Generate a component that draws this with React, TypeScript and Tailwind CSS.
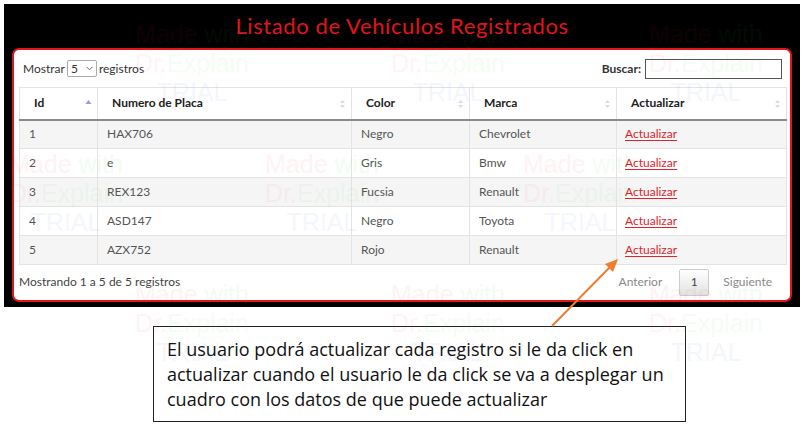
import React from 'react'

const rows = [
  { id: 1, placa: 'HAX706', color: 'Negro', marca: 'Chevrolet' },
  { id: 2, placa: 'e', color: 'Gris', marca: 'Bmw' },
  { id: 3, placa: 'REX123', color: 'Fucsia', marca: 'Renault' },
  { id: 4, placa: 'ASD147', color: 'Negro', marca: 'Toyota' },
  { id: 5, placa: 'AZX752', color: 'Rojo', marca: 'Renault' }
]

const columns = [
  { label: 'Id', width: 'w-[78px]', sorted: true },
  { label: 'Numero de Placa', width: 'w-[254px]', sorted: false },
  { label: 'Color', width: 'w-[118px]', sorted: false },
  { label: 'Marca', width: 'w-[147px]', sorted: false },
  { label: 'Actualizar', width: 'w-[170px]', sorted: false }
]

// watermark tiles left by the screenshot tool
const marks = [
  { x: 130, y: 20 }, { x: 386, y: 20 }, { x: 644, y: 20 },
  { x: 4, y: 150 }, { x: 260, y: 150 }, { x: 518, y: 150 },
  { x: 130, y: 280 }, { x: 386, y: 280 }, { x: 644, y: 280 }
]

function SortIcon({ active }: { active: boolean }) {
  if (active) {
    return (
      <svg width="7" height="10" viewBox="0 0 7 10" className="absolute right-[5px] top-[11px]">
        <path d="M0.5 5 L3.5 1 L6.5 5 Z" fill="#9a9ad8" />
      </svg>
    )
  }
  return (
    <svg width="7" height="10" viewBox="0 0 7 10" className="absolute right-[5px] top-[11px]">
      <path d="M1 4 L3.5 1 L6 4 Z" fill="#dcdcdc" />
      <path d="M1 6 L3.5 9 L6 6 Z" fill="#dcdcdc" />
    </svg>
  )
}

export default function App() {
  return (
    <div className="relative h-[425px] w-[807px] overflow-hidden bg-white font-['Lato',sans-serif]">
      {/* Black stage with title + card */}
      <div className="ml-[4px] mt-[4px] flex h-[303px] w-[796px] flex-col bg-black">
        <div className="flex h-[44px] items-center justify-center">
          <h1 className="text-[22px] leading-none tracking-[0.6px] text-[#e0141c]">Listado de Vehículos Registrados</h1>
        </div>

        <div className="ml-[8px] h-[254px] w-[780px] rounded-[7px] border-2 border-[#e3141c] bg-white px-[5px] pt-[8px] text-[12px] text-[#333]">
          {/* Top controls */}
          <div className="flex h-[21px] items-center justify-between pl-[4px] pr-[3px]">
            <div className="flex items-center gap-[2px]">
              <span>Mostrar</span>
              <div className="flex h-[17px] w-[30px] items-center justify-between rounded-[2px] border border-[#aaa] px-[3px] text-[12px]">
                <span>5</span>
                <svg width="7" height="5" viewBox="0 0 7 5">
                  <path d="M0.5 0.8 L3.5 3.8 L6.5 0.8" stroke="#555" strokeWidth="0.9" fill="none" />
                </svg>
              </div>
              <span>registros</span>
            </div>
            <div className="flex items-center gap-[4px]">
              <span className="font-bold">Buscar:</span>
              <div className="h-[20px] w-[137px] border border-[#555] bg-white" />
            </div>
          </div>

          {/* Table */}
          <table className="mt-[8px] w-[767px] table-fixed border-collapse">
            <thead>
              <tr className="h-[32px]">
                {columns.map((c) => (
                  <th
                    key={c.label}
                    className={`${c.width} relative border border-b-2 border-[#e3e3e3] border-b-[#8a8a8a] pl-[14px] text-left text-[12px] font-bold text-[#222]`}
                  >
                    {c.label}
                    <SortIcon active={c.sorted} />
                  </th>
                ))}
              </tr>
            </thead>
            <tbody>
              {rows.map((r, i) => (
                <tr key={r.id} className={`h-[29px] ${i % 2 === 0 ? 'bg-[#f5f5f5]' : 'bg-white'} ${i === rows.length - 1 ? 'border-b border-b-[#777]' : ''}`}>
                  <td className="border border-[#e3e3e3] pl-[9px] text-[#555]">{r.id}</td>
                  <td className="border border-[#e3e3e3] pl-[9px] text-[#555]">{r.placa}</td>
                  <td className="border border-[#e3e3e3] pl-[9px] text-[#555]">{r.color}</td>
                  <td className="border border-[#e3e3e3] pl-[9px] text-[#555]">{r.marca}</td>
                  <td className="border border-[#e3e3e3] pl-[8px]">
                    <span className="text-[#e0222a] underline underline-offset-2">Actualizar</span>
                  </td>
                </tr>
              ))}
            </tbody>
          </table>

          {/* Footer */}
          <div className="flex h-[34px] items-center justify-between">
            <span className="text-[#444]">Mostrando 1 a 5 de 5 registros</span>
            <div className="flex items-center pr-[13px] text-[#888]">
              <span>Anterior</span>
              <div className="ml-[17px] flex h-[27px] w-[30px] items-center justify-center rounded-[2px] border border-[#ccc] bg-gradient-to-b from-white to-[#e2e2e2] text-[#444]">
                1
              </div>
              <span className="ml-[14px]">Siguiente</span>
            </div>
          </div>
        </div>
      </div>

      {/* Explanation box */}
      <div className="ml-[153px] mt-[19px] h-[96px] w-[533px] border border-[#222] bg-white pl-[13px] pt-[10px] font-['Open_Sans',sans-serif] text-[18px] leading-[25px] text-[#111]">
        <p>El usuario podrá actualizar cada registro si le da click en</p>
        <p>actualizar cuando el usuario le da click se va a desplegar un</p>
        <p>cuadro con los datos de que puede actualizar</p>
      </div>

      {/* Callout arrow */}
      <svg className="pointer-events-none absolute left-0 top-0" width="807" height="425" viewBox="0 0 807 425">
        <line x1="552" y1="326" x2="611" y2="266" stroke="#ed7d31" strokeWidth="2" />
        <path d="M618 259 L605 264 L613 272 Z" fill="#ed7d31" />
      </svg>

      {/* Trial watermark */}
      <div aria-hidden="true" className="pointer-events-none absolute inset-0 opacity-[0.05]">
        {marks.map((m, i) => (
          <div
            key={i}
            className="absolute flex w-[124px] flex-col items-center font-['Liberation_Sans',sans-serif] text-[25px] leading-[29px]"
            style={{ left: m.x, top: m.y }}
          >
            <span><span className="text-[#ff2040]">Made </span><span className="text-[#20c040]">with</span></span>
            <span><span className="text-[#ff3060]">Dr.</span><span className="text-[#40d040]">Explain</span></span>
            <span className="text-[#4060ff]">TRIAL</span>
          </div>
        ))}
      </div>
    </div>
  )
}
